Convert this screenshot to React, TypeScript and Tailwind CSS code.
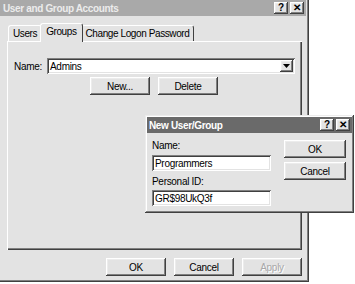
const raised =
  "shadow-[inset_-1px_-1px_#404040,inset_1px_1px_#ffffff,inset_-2px_-2px_#808080,inset_2px_2px_#ececec]";
const sunken =
  "shadow-[inset_1px_1px_#808080,inset_-1px_-1px_#ffffff,inset_2px_2px_#404040,inset_-2px_-2px_#e3e3e3]";

function Btn({ label, w, disabled }: { label: string; w: string; disabled?: boolean }) {
  return (
    <div
      className={`${raised} ${w} flex h-[18px] items-center justify-center bg-[#e3e3e3] ${
        disabled ? "text-[#a8a8a8] [text-shadow:1px_1px_#fff]" : "text-black"
      }`}
    >
      {label}
    </div>
  );
}

function CapBtn({ glyph }: { glyph: string }) {
  return (
    <div
      className={`${raised} flex h-[12px] w-[14px] items-center justify-center bg-[#e3e3e3] text-[10px] font-bold leading-none tracking-normal text-black`}
    >
      {glyph}
    </div>
  );
}

function Tab({ label, active }: { label: string; active?: boolean }) {
  return (
    <div
      className={`relative flex items-center rounded-t-[3px] border-l border-t border-r border-l-white border-t-white border-r-[#404040] bg-[#e3e3e3] text-black ${
        active ? "z-10 -mx-[2px] -mb-px h-[19px] px-[5px] pb-[3px]" : "h-[16px] px-[4px]"
      }`}
    >
      {label}
    </div>
  );
}

export default function App() {
  return (
    <div
      className="relative h-[284px] w-[355px] overflow-hidden bg-white text-[10px] tracking-[-0.3px]"
      style={{ fontFamily: '"Liberation Sans", Arial, sans-serif' }}
    >
      {/* main window */}
      <div className="flex h-[282px] w-[309px] flex-col bg-[#e3e3e3] shadow-[inset_-1px_-1px_#404040,inset_-2px_-2px_#808080]">
        <div className="mr-[3px] flex h-[16px] items-center justify-between bg-[#a9a9a9] pl-[3px] pr-[2px]">
          <span className="font-bold tracking-[-0.35px] text-[#ececec]">User and Group Accounts</span>
          <div className="flex gap-[2px]">
            <CapBtn glyph="?" />
            <CapBtn glyph="✕" />
          </div>
        </div>

        <div className="ml-[8px] mt-[7px] flex items-end tracking-[-0.4px]">
          <Tab label="Users" />
          <Tab label="Groups" active />
          <Tab label="Change Logon Password" />
        </div>

        <div className="ml-[7px] flex h-[209px] w-[295px] flex-col border-l border-t border-l-white border-t-white shadow-[inset_-1px_-1px_#404040,inset_-2px_-2px_#808080]">
          <div className="mt-[16px] flex items-center pl-[6px] pr-[7px]">
            <span className="w-[33px] text-black">Name:</span>
            <div className={`${sunken} flex h-[16px] flex-1 items-center justify-between bg-white pl-[3px] pr-[2px]`}>
              <span className="text-black">Admins</span>
              <div className={`${raised} flex h-[12px] w-[13px] items-center justify-center bg-[#e3e3e3]`}>
                <svg width="7" height="4" viewBox="0 0 7 4">
                  <path d="M0 0h7L3.5 4z" fill="#000" />
                </svg>
              </div>
            </div>
          </div>
          <div className="ml-[82px] mt-[3px] flex gap-[8px]">
            <Btn label="New..." w="w-[60px]" />
            <Btn label="Delete" w="w-[60px]" />
          </div>
        </div>

        <div className="ml-[106px] mt-[8px] flex gap-[8px]">
          <Btn label="OK" w="w-[60px]" />
          <Btn label="Cancel" w="w-[60px]" />
          <Btn label="Apply" w="w-[60px]" disabled />
        </div>
      </div>

      {/* New User/Group dialog */}
      <div className="absolute left-[145px] top-[115px] flex h-[98px] w-[209px] flex-col bg-[#e3e3e3] p-[2px] shadow-[inset_-1px_-1px_#404040,inset_1px_1px_#ececec,inset_-2px_-2px_#808080,inset_2px_2px_#ffffff]">
        <div className="flex h-[16px] items-center justify-between bg-[#6a6a6a] pl-[2px] pr-[2px]">
          <span className="font-bold tracking-[-0.35px] text-white">New User/Group</span>
          <div className="flex gap-[2px]">
            <CapBtn glyph="?" />
            <CapBtn glyph="✕" />
          </div>
        </div>
        <div className="flex pl-[5px] pr-[6px]">
          <div className="flex w-[119px] flex-col">
            <span className="mt-[6px] leading-[13px] text-black">Name:</span>
            <div className={`${sunken} mt-[3px] flex h-[16px] items-center bg-white pl-[3px] text-black`}>
              Programmers
            </div>
            <span className="mt-[4px] leading-[13px] text-black">Personal ID:</span>
            <div className={`${sunken} mt-[2px] flex h-[16px] items-center bg-white pl-[3px] text-black`}>
              GR$98UkQ3f
            </div>
          </div>
          <div className="ml-auto mt-[7px] flex flex-col gap-[4px]">
            <Btn label="OK" w="w-[62px]" />
            <Btn label="Cancel" w="w-[62px]" />
          </div>
        </div>
      </div>
    </div>
  );
}
